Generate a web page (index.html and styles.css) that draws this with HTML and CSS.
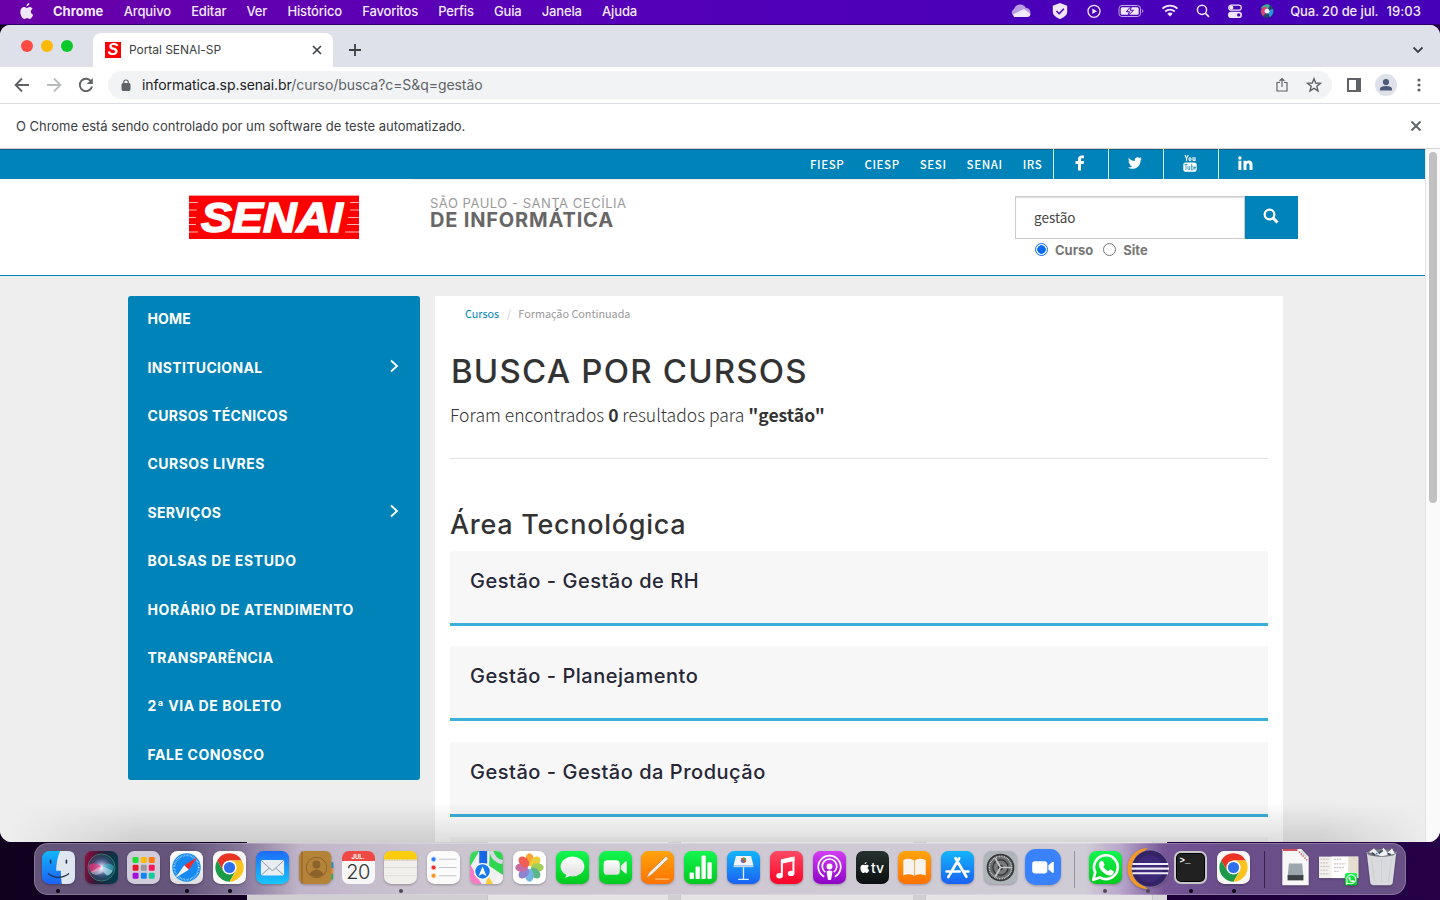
FILE: index.html
```html
<!DOCTYPE html>
<html lang="pt-BR">
<head>
<meta charset="utf-8">
<title>Portal SENAI-SP</title>
<link rel="stylesheet" href="styles.css">
</head>
<body>
<svg width="0" height="0" class="defs">
  <defs>
    <linearGradient id="gBlue" x1="0" y1="0" x2="0" y2="1"><stop offset="0" stop-color="#1e6bfa"/><stop offset="1" stop-color="#17c6fb"/></linearGradient>
    <linearGradient id="gBlue2" x1="0" y1="0" x2="0" y2="1"><stop offset="0" stop-color="#12b5fb"/><stop offset="1" stop-color="#1b62f2"/></linearGradient>
    <linearGradient id="gGreen" x1="0" y1="0" x2="0" y2="1"><stop offset="0" stop-color="#12f650"/><stop offset="1" stop-color="#03c91e"/></linearGradient>
    <linearGradient id="gRed" x1="0" y1="0" x2="0" y2="1"><stop offset="0" stop-color="#fd4a64"/><stop offset="1" stop-color="#fa0427"/></linearGradient>
    <linearGradient id="gPurple" x1="0" y1="0" x2="0" y2="1"><stop offset="0" stop-color="#d33df4"/><stop offset="1" stop-color="#8d05c5"/></linearGradient>
    <linearGradient id="gOrange" x1="0" y1="0" x2="0" y2="1"><stop offset="0" stop-color="#ffa40b"/><stop offset="1" stop-color="#ff7202"/></linearGradient>
    <linearGradient id="gWhite" x1="0" y1="0" x2="0" y2="1"><stop offset="0" stop-color="#fff"/><stop offset="1" stop-color="#dedede"/></linearGradient>
    <linearGradient id="gSiri" x1="0" y1="0" x2="1" y2="0.2"><stop offset="0" stop-color="#9b0b3b"/><stop offset=".5" stop-color="#2b1c3a"/><stop offset="1" stop-color="#043b4c"/></linearGradient>
    <radialGradient id="gOrb"><stop offset="0" stop-color="#fff"/><stop offset=".3" stop-color="#a9a4d6" stop-opacity=".9"/><stop offset=".7" stop-color="#3c6f9e" stop-opacity=".5"/><stop offset="1" stop-color="#17605f" stop-opacity=".4"/></radialGradient>
    <symbol id="chrome" viewBox="0 0 100 100">
      <rect width="100" height="100" rx="22" fill="#f8f8f8"/>
      <path d="M50 7A43 43 0 0 1 87.2 28.5H50L31.4 60.7 12.8 28.5A43 43 0 0 1 50 7Z" fill="#ea3323"/>
      <path d="M12.8 28.5A43 43 0 0 0 50 93L68.6 60.7 31.4 60.7Z" fill="#1d9a48"/>
      <path d="M87.2 28.5A43 43 0 0 1 50 93L68.6 60.7 50 28.5Z" fill="#fcc31e"/>
      <circle cx="50" cy="50" r="21.5" fill="#fff"/><circle cx="50" cy="50" r="17" fill="#2e70ee"/>
    </symbol>
    <symbol id="whats" viewBox="0 0 100 100">
      <rect width="100" height="100" rx="22" fill="url(#gGreen)"/>
      <path d="M13 87 19 65A36 36 0 1 1 33 80Z" fill="none" stroke="#fff" stroke-width="8" stroke-linejoin="round"/>
      <path d="M35 31q5-4 8 1l4 9q0 4-4 7 5 9 15 13 4-6 8-5l9 5q1 9-8 13-10 3-24-9-17-17-12-28 1-4 4-6Z" fill="#fff"/>
    </symbol>
  </defs>
</svg>
<div class="desktop">
  <header class="menubar">
    <nav class="menus">
      <svg class="apple" width="14" height="16" viewBox="0 0 14 16"><path d="M9.300 0c.1 1.700-1.200 3.300-2.800 3.300C6.300 1.700 7.700.2 9.300 0ZM9.600 4c1.100 0 2.300.6 3 1.700-2.600 1.500-2.200 5 .6 6C12.500 13.500 11.100 16 9.600 16c-1 0-1.300-.7-2.600-.7S5.300 16 4.400 16C2.500 16 .3 12.200.3 9c0-3.200 2-4.900 3.900-4.900 1.200 0 2.100.8 2.900.8.700 0 1.500-.9 2.500-.9Z" fill="#f0e6fa"/></svg>
      <b class="m-app">Chrome</b><span>Arquivo</span><span>Editar</span><span>Ver</span><span>Histórico</span><span>Favoritos</span><span>Perfis</span><span>Guia</span><span>Janela</span><span>Ajuda</span>
    </nav>
    <div class="status">
      <svg class="cloud" width="22" height="24" viewBox="0 0 22 24"><path d="M5 17.500a4 4 0 0 1-1-7.500 6.500 6.500 0 0 1 12-1 4.300 4.300 0 0 1 1 8.500Z" fill="#b99be5"/><path d="M3 15.500 14 10l6.500 5a3 3 0 0 1-2.500 3H4Z" fill="#f0e9fb"/></svg>
      <svg class="shield" width="16" height="24" viewBox="0 0 16 24"><path d="M8 4 15.200 6.800V13c0 3-3.500 5.500-7.200 7-3.700-1.500-7.200-4-7.200-7V6.800Z" fill="#f0e6fa"/><path d="m4.500 12 2.700 2.700 4.600-5" fill="none" stroke="#4a00b8" stroke-width="1.600"/></svg>
      <svg width="14" height="24" viewBox="0 0 14 24"><circle cx="7" cy="12.300" r="6" fill="none" stroke="#f0e6fa" stroke-width="1.300"/><path d="m5.300 9.500 4.700 2.800-4.700 2.800Z" fill="#f0e6fa"/></svg>
      <svg width="26" height="24" viewBox="0 0 26 24"><rect x="1" y="6.500" width="21.500" height="11" rx="3" fill="none" stroke="#c5a9eb"/><rect x="2.700" y="8.200" width="18" height="7.600" rx="1.500" fill="#f0e6fa"/><path d="M24 10.500q2 1.500 0 3" fill="none" stroke="#c5a9eb"/><path d="M13.500 7 8.300 12.700h3.200L9.700 17l5.800-5.700h-3.200Z" fill="#f0e6fa" stroke="#4a00b8"/></svg>
      <svg width="18" height="24" viewBox="0 0 18 24"><path d="M1.500 9.600a11 11 0 0 1 15 0M4.200 12.500a7 7 0 0 1 9.600 0" fill="none" stroke="#f0e6fa" stroke-width="1.900"/><path d="M9 17.500 6.300 14.700a4 4 0 0 1 5.400 0Z" fill="#f0e6fa"/></svg>
      <svg width="14" height="24" viewBox="0 0 14 24"><circle cx="6" cy="10.800" r="4.600" fill="none" stroke="#f0e6fa" stroke-width="1.500"/><path d="m9.300 14.200 3.700 3.700" stroke="#f0e6fa" stroke-width="1.700"/></svg>
      <svg width="16" height="24" viewBox="0 0 16 24"><rect x="1.700" y="6.200" width="12.600" height="5" rx="2.500" fill="none" stroke="#f0e6fa" stroke-width="1.200"/><circle cx="4.300" cy="8.700" r="2.100" fill="#f0e6fa"/><rect x="1" y="12.700" width="14" height="6.300" rx="3.100" fill="#f0e6fa"/><circle cx="11.700" cy="15.900" r="1.700" fill="#4a00b8"/></svg>
      <svg width="14" height="24" viewBox="0 0 14 24"><circle cx="7" cy="12.200" r="6.800" fill="#244468"/><path d="M1 9a7 7 0 0 1 9-3L7 12Z" fill="#35b39a"/><path d="M1 12q1-5 6-4v5l-4 4q-2-2-2-5Z" fill="#e04078"/><path d="m7 12 6-2q1 5-3 8Z" fill="#2a9ae2"/><circle cx="7" cy="12.200" r="2.400" fill="#f3eafc"/></svg>
      <span class="clock">Qua. 20 de jul.</span><span class="time">19:03</span>
    </div>
  </header>

  <main class="window">
    <div class="tabstrip">
      <div class="lights"><i class="red"></i><i class="yellow"></i><i class="green"></i></div>
      <div class="tab">
        <span class="favicon">S</span><span class="tab-title">Portal SENAI-SP</span>
        <svg width="10" height="10" viewBox="0 0 10 10"><path d="m1 1 8 8M9 1 1 9" stroke="#3c4043" stroke-width="1.600"/></svg>
      </div>
      <svg class="plus" width="14" height="14" viewBox="0 0 14 14"><path d="M7 1v12M1 7h12" stroke="#3c4043" stroke-width="1.800"/></svg>
      <svg class="chev" width="12" height="8" viewBox="0 0 12 8"><path d="m1.500 1.500 4.500 4.500 4.500-4.500" fill="none" stroke="#3c4043" stroke-width="1.800"/></svg>
    </div>
    <div class="toolbar">
      <svg class="nav-i" width="16" height="16" viewBox="0 0 16 16"><path d="M15 8H2M8 1.500 1.600 8 8 14.500" fill="none" stroke="#5f6368" stroke-width="1.800"/></svg>
      <svg class="nav-i" width="16" height="16" viewBox="0 0 16 16"><path d="M1 8h13M8 1.500 14.400 8 8 14.500" fill="none" stroke="#babcbe" stroke-width="1.800"/></svg>
      <svg class="nav-i" width="16" height="16" viewBox="0 0 16 16"><path d="M13.200 4.500A6.200 6.200 0 1 0 14 9.500" fill="none" stroke="#5f6368" stroke-width="1.900"/><path d="M14.800 1v6H8.800Z" fill="#5f6368"/></svg>
      <div class="omnibox">
        <svg width="10" height="13" viewBox="0 0 10 13"><rect x="1" y="4.500" width="8" height="7" rx="1" fill="#5f6368" stroke="#5f6368"/><path d="M2.700 5V3.300a2.300 2.300 0 0 1 4.600 0V5" fill="none" stroke="#5f6368" stroke-width="1.200"/></svg>
        <span class="url"><b>informatica.sp.senai.br</b>/curso/busca?c=S&amp;q=gestão</span>
        <svg width="12" height="16" viewBox="0 0 12 16"><path d="M4 5.500H1V14h10V5.500H8M6 10V1.800M3.500 4 6 1.500 8.500 4" fill="none" stroke="#5f6368" stroke-width="1.200"/></svg>
        <svg width="16" height="16" viewBox="0 0 16 16"><path d="m8 1.700 1.700 4.300 4.700.3-3.600 3 1.200 4.600L8 11.400l-4 2.500 1.200-4.600-3.600-3L6.300 6Z" fill="none" stroke="#5f6368" stroke-width="1.400"/></svg>
      </div>
      <svg class="panel" width="14" height="14" viewBox="0 0 14 14"><path d="M0 0h14v14H0ZM2 2v10h7V2Z" fill="#5f6368" fill-rule="evenodd"/></svg>
      <svg class="user" width="22" height="22" viewBox="0 0 22 22"><circle cx="11" cy="11" r="11" fill="#dee1e9"/><circle cx="11" cy="8" r="3.100" fill="#4d5b78"/><path d="M5 16.500V15c0-2.200 3.500-3 6-3s6 .8 6 3v1.500Z" fill="#4d5b78"/></svg>
      <svg class="dots" width="4" height="14" viewBox="0 0 4 14"><g fill="#5f6368"><circle cx="2" cy="2" r="1.600"/><circle cx="2" cy="7" r="1.600"/><circle cx="2" cy="12" r="1.600"/></g></svg>
    </div>
    <div class="infobar"><span>O Chrome está sendo controlado por um software de teste automatizado.</span>
      <svg width="12" height="12" viewBox="0 0 12 12"><path d="m1.500 1.500 9 9M10.500 1.500l-9 9" stroke="#5f6368" stroke-width="1.900"/></svg>
    </div>
    <div class="viewport">
      <div class="page">
        <div class="topbar">
          <nav class="toplinks"><a>FIESP</a><a>CIESP</a><a>SESI</a><a>SENAI</a><a>IRS</a></nav>
          <div class="social">
            <a><svg width="10" height="16" viewBox="0 0 10 16"><path d="M9 .5V3.200H7.400C6.300 3.200 6 3.700 6 4.500V6h3l-.4 2.900H6V15.500H3V8.900H.5V6H3V4C3 1.600 4.500.4 6.700.4 7.700.4 8.600.5 9 .5Z" fill="#fff"/></svg></a>
            <a><svg width="14" height="12" viewBox="0 0 14 12"><path d="M14 1.500 12.600 3c.2 5-3.600 8.800-8.200 8.800C2.800 11.800 1.300 11.400 0 10.500c1.500.2 3-.2 4.200-1.200C3 9.200 2 8.400 1.600 7.300h1.200C1.500 7 .5 5.800.5 4.400l1.300.4C.5 3.900.2 2.200.9.900c1.500 1.800 3.500 2.900 5.900 3C6.200.7 9.600-1 11.700 1l1.800-.7-1.200 1.600Z" fill="#fff"/></svg></a>
            <a><svg width="14" height="17" viewBox="0 0 14 17"><path d="m2 0 1.500 3.200V6M5.200 0 3.500 3.500M6 3.500v1.200q1 1.500 2 0V3.500q-1-1.500-2 0ZM10 2v3q.5.800 2 0M12 2v4" fill="none" stroke="#fff" stroke-width="1.100"/><rect x=".3" y="7.500" width="13.400" height="9.200" rx="2.200" fill="#fff"/><path d="M1.500 9.500h3M3 9.500V15M5 11v3q.5 1 1.700 0M6.700 11v4M8.600 9v6q2 .3 1.700-1.500V12q-.5-1.200-1.700-.5M12.500 14q-1 1-1.200-.5V12q.7-1.200 1.300 0v1h-1.300" fill="none" stroke="#0083b8" stroke-width=".7"/></svg></a>
            <a><svg width="15" height="14" viewBox="0 0 15 14"><path d="M.4 4.700h3V14h-3ZM5.500 4.700h3v1.200C9.600 3.900 14.500 3.700 14.500 8.500V14h-3V9.200c0-2.800-3-2.600-3 0V14h-3Z" fill="#fff"/><circle cx="1.900" cy="2" r="1.700" fill="#fff"/></svg></a>
          </div>
        </div>
        <div class="header">
          <svg class="logo" width="170" height="44" viewBox="0 0 170 44"><rect width="170" height="44" fill="#fe0000"/><path d="M0 .5h170" stroke="#ff9c9c"/><path d="M0 7.500h9M0 15h8M0 22.500h7M0 29.500h7M0 37h9M161 7.500h9M161 15h9M159 22.500h11M158 29.500h12M156 37h14" stroke="#ffb4b4" stroke-width="1.200"/><text x="12" y="37" textLength="142" lengthAdjust="spacingAndGlyphs">SENAI</text></svg>
          <div class="unit"><span>SÃO PAULO - SANTA CECÍLIA</span><b>DE INFORMÁTICA</b></div>
          <div class="search">
            <div class="search-row"><div class="field">gestão</div><div class="go"><svg width="16" height="16" viewBox="0 0 16 16"><circle cx="6.500" cy="6.500" r="4.800" fill="none" stroke="#fff" stroke-width="2.300"/><path d="m10 10 4.500 4.500" stroke="#fff" stroke-width="3"/></svg></div></div>
            <div class="radios"><i class="radio on"></i><b>Curso</b><i class="radio"></i><b>Site</b></div>
          </div>
        </div>
        <div class="columns">
          <aside class="side">
            <a class="snug">HOME</a>
            <a class="close">INSTITUCIONAL<svg width="10" height="14" viewBox="0 0 10 14"><path d="m2 1.500 6 5.500-6 5.500" fill="none" stroke="#fff" stroke-width="1.800"/></svg></a>
            <a class="close">CURSOS TÉCNICOS</a><a>CURSOS LIVRES</a>
            <a class="close">SERVIÇOS<svg width="10" height="14" viewBox="0 0 10 14"><path d="m2 1.500 6 5.500-6 5.500" fill="none" stroke="#fff" stroke-width="1.800"/></svg></a>
            <a class="wide">BOLSAS DE ESTUDO</a><a class="wide">HORÁRIO DE ATENDIMENTO</a><a>TRANSPARÊNCIA</a><a class="wide">2ª VIA DE BOLETO</a><a class="wide">FALE CONOSCO</a>
          </aside>
          <section class="content">
            <div class="crumbs"><a>Cursos</a><i>/</i><span>Formação Continuada</span></div>
            <h1>BUSCA POR CURSOS</h1>
            <p class="found">Foram encontrados <b>0</b> resultados para <b>"gestão"</b></p>
            <hr>
            <h2>Área Tecnológica</h2>
            <div class="card">Gestão - Gestão de RH</div>
            <div class="card">Gestão - Planejamento</div>
            <div class="card">Gestão - Gestão da Produção</div>
            <div class="card"></div>
          </section>
        </div>
      </div>
      <div class="scroll"><div class="thumb"></div></div>
    </div>
    <div class="shade"></div>
  </main>

  <div class="behind"><i class="b1"></i><i class="b2"></i><i class="b3"></i><i class="b4"></i></div>

  <footer class="dock">
    <div class="app run"><svg viewBox="0 0 100 100"><rect width="100" height="100" rx="22" fill="url(#gBlue2)"/><path d="M55 0H78Q100 0 100 22V78Q100 100 78 100H60Q57 82 57 60H43Q43 28 55 0Z" fill="#dfe6f0"/><path d="M26 28v8M74 28v8" stroke="#20304a" stroke-width="5" stroke-linecap="round"/><path d="M18 68Q50 92 82 68" fill="none" stroke="#20304a" stroke-width="4"/></svg></div>
    <div class="app"><svg viewBox="0 0 100 100"><rect width="100" height="100" rx="22" fill="url(#gSiri)"/><circle cx="50" cy="50" r="41" fill="url(#gOrb)" stroke="#479481" stroke-width="2"/><path d="M10 44Q28 28 50 48 28 75 14 58Z" fill="#f0347e" opacity=".7"/><path d="M50 48Q72 28 88 48 82 74 64 76Z" fill="#40c9d7" opacity=".5"/><path d="M16 64 50 45 84 60Q70 85 55 64 32 82 16 64Z" fill="#fff" opacity=".4"/></svg></div>
    <div class="app"><svg viewBox="0 0 100 100"><rect width="100" height="100" rx="22" fill="#d0ccd9"/><g><rect x="17" y="18" width="18" height="18" rx="4" fill="#1edc32"/><rect x="42" y="18" width="18" height="18" rx="4" fill="#fbb908"/><rect x="66" y="18" width="18" height="18" rx="4" fill="#fb7a08"/><rect x="17" y="42" width="18" height="18" rx="4" fill="#e91828"/><rect x="42" y="42" width="18" height="18" rx="4" fill="#96969c"/><rect x="66" y="42" width="18" height="18" rx="4" fill="#f7195c"/><rect x="17" y="66" width="18" height="18" rx="4" fill="#a211dd"/><rect x="42" y="66" width="18" height="18" rx="4" fill="#1386f5"/><rect x="66" y="66" width="18" height="18" rx="4" fill="#12caa0"/></g></svg></div>
    <div class="app run"><svg viewBox="0 0 100 100"><rect width="100" height="100" rx="22" fill="url(#gWhite)"/><circle cx="50" cy="50" r="43" fill="#168af2"/><circle cx="50" cy="50" r="37" fill="none" stroke="#d0e8ff" stroke-width="6" stroke-dasharray="1.500 3"/><path d="M83 19 57 57 43 43Z" fill="#f02c2c"/><path d="M17 81 43 43 57 57Z" fill="#f4f4f4"/></svg></div>
    <div class="app run"><svg><use href="#chrome"/></svg></div>
    <div class="app"><svg viewBox="0 0 100 100"><rect width="100" height="100" rx="22" fill="url(#gBlue)"/><rect x="15" y="27" width="70" height="47" rx="5" fill="#e9edf2"/><path d="m17 30 29 27q4 3 8 0L83 30M17 72 40 52M83 72 60 52" fill="none" stroke="#8b99a8" stroke-width="3"/></svg></div>
    <div class="app"><svg viewBox="0 0 100 100"><path d="M90 34h14v18H90Z" fill="#248fc4"/><path d="M90 52h13v17H90Z" fill="#ef8b24"/><path d="M90 69h13v17H90Z" fill="#1fb357"/><rect width="98" height="100" rx="18" fill="#b48338"/><path d="M9 1v98" stroke="#8a602b" stroke-width="3"/><circle cx="53" cy="50" r="31" fill="none" stroke="#8b632c" stroke-width="3"/><circle cx="53" cy="41" r="12" fill="#8b632c"/><path d="M31 70Q53 42 75 70 53 90 31 70Z" fill="#8b632c"/></svg></div>
    <div class="app cal"><span>JUL.</span><b>20</b></div>
    <div class="app run grey"><svg viewBox="0 0 100 100"><rect width="100" height="100" rx="22" fill="#f0efec"/><path d="M0 26V22Q0 0 22 0H78Q100 0 100 22V26Z" fill="#fdcc0c"/><path d="M0 28h100" stroke="#aaa08a" stroke-width="2" stroke-dasharray="3 2"/><path d="M0 50h100M0 75h100" stroke="#d4d2ce" stroke-width="2"/></svg></div>
    <div class="app"><svg viewBox="0 0 100 100"><rect width="100" height="100" rx="22" fill="#fbfbfb"/><g stroke-width="3"><circle cx="20" cy="25" r="7" fill="#2778f0" stroke="#aaccff"/><circle cx="20" cy="50" r="7" fill="#ec2b2b" stroke="#ffb5b5"/><circle cx="20" cy="75" r="7" fill="#f69324" stroke="#ffd8ab"/><path d="M37 25h52M37 50h52M37 75h52" stroke="#c5c5c5"/></g></svg></div>
    <div class="app"><svg viewBox="0 0 100 100"><rect width="100" height="100" rx="22" fill="#f0eff0"/><path d="M22 0H28L0 48V22Q0 0 22 0Z" fill="#36da58"/><path d="M28 0H52V38H28Z" fill="#1766e5"/><path d="M60 0H78Q100 0 100 22V73L58 45Z" fill="#2ed551"/><path d="M64 0Q72 30 99 34" fill="none" stroke="#d6d8df" stroke-width="13"/><path d="M0 40 35 100H22Q0 100 0 78Z" fill="#f97bc6"/><path d="M100 80 84 72 72 100H78Q100 100 100 80Z" fill="#f4f4f4"/><path d="M55 76 70 100H48Z" fill="#fdca31"/><circle cx="38" cy="62" r="24" fill="#1679ee" stroke="#fff" stroke-width="4"/><path d="m38 47 12 29-12-7-12 7Z" fill="#fff"/></svg></div>
    <div class="app"><svg viewBox="0 0 100 100"><rect width="100" height="100" rx="22" fill="#fff"/><g opacity=".86"><ellipse cx="50" cy="26" rx="13" ry="19" fill="#fa9512"/><ellipse cx="50" cy="26" rx="13" ry="19" fill="#e6c519" transform="rotate(45 50 50)"/><ellipse cx="50" cy="26" rx="13" ry="19" fill="#93c83c" transform="rotate(90 50 50)"/><ellipse cx="50" cy="26" rx="13" ry="19" fill="#42ab78" transform="rotate(135 50 50)"/><ellipse cx="50" cy="26" rx="13" ry="19" fill="#5aa9df" transform="rotate(180 50 50)"/><ellipse cx="50" cy="26" rx="13" ry="19" fill="#7c71c6" transform="rotate(225 50 50)"/><ellipse cx="50" cy="26" rx="13" ry="19" fill="#c05394" transform="rotate(270 50 50)"/><ellipse cx="50" cy="26" rx="13" ry="19" fill="#ee4336" transform="rotate(315 50 50)"/></g></svg></div>
    <div class="app"><svg viewBox="0 0 100 100"><rect width="100" height="100" rx="22" fill="url(#gGreen)"/><ellipse cx="50" cy="47" rx="36" ry="30" fill="url(#gWhite)"/><path d="M32 68q1 7-6 13 13-1 19-8Z" fill="#eee"/></svg></div>
    <div class="app"><svg viewBox="0 0 100 100"><rect width="100" height="100" rx="22" fill="url(#gGreen)"/><rect x="14" y="28" width="49" height="44" rx="11" fill="url(#gWhite)"/><path d="M66 45 80 32q4-3 4 2V66q0 5-4 2L66 55Z" fill="#eee"/></svg></div>
    <div class="app"><svg viewBox="0 0 100 100"><rect width="100" height="100" rx="22" fill="url(#gOrange)"/><path d="M75 17q8 0 7 8L32 72 16 82 24 66Z" fill="#eee" stroke="#b96a15" stroke-width="1.500"/><path d="M42 85h44" stroke="#ffd394" stroke-width="3"/></svg></div>
    <div class="app"><svg viewBox="0 0 100 100"><rect width="100" height="100" rx="22" fill="url(#gGreen)"/><g fill="#fff"><rect x="17" y="65" width="13" height="20" rx="3"/><rect x="35" y="47" width="13" height="38" rx="3"/><rect x="53" y="14" width="13" height="71" rx="3"/><rect x="71" y="34" width="13" height="51" rx="3"/></g></svg></div>
    <div class="app"><svg viewBox="0 0 100 100"><rect width="100" height="100" rx="22" fill="url(#gBlue2)"/><path d="M27 15h46l7 29H20Z" fill="#eff5fa"/><path d="M20 44h60v5H20Z" fill="#c4d8e8"/><circle cx="50" cy="28" r="8" fill="#e8472e"/><path d="M50 20v8h8a8 8 0 0 0-8-8Z" fill="#27ba60"/><path d="M50 28h-8a8 8 0 0 0 8 8Z" fill="#387be6"/><path d="M50 49v35M34 86h32" stroke="#dceeff" stroke-width="4"/></svg></div>
    <div class="app"><svg viewBox="0 0 100 100"><rect width="100" height="100" rx="22" fill="url(#gRed)"/><path d="M36 74V29L71 21V67" fill="none" stroke="#fff" stroke-width="6"/><path d="M34 25 74 17V30L34 39Z" fill="#fff"/><ellipse cx="29" cy="75" rx="10" ry="8" fill="#fff"/><ellipse cx="64" cy="68" rx="10" ry="8" fill="#fff"/></svg></div>
    <div class="app"><svg viewBox="0 0 100 100"><rect width="100" height="100" rx="22" fill="url(#gPurple)"/><g fill="none" stroke="#fff" stroke-width="5"><path d="M34 78A34 34 0 1 1 66 78"/><path d="M37 64A22 22 0 1 1 63 64"/></g><circle cx="50" cy="47" r="9" fill="#fff"/><path d="M41 62q9-6 18 0l-4 24q-5 4-10 0Z" fill="#fff"/></svg></div>
    <div class="app tv"><svg viewBox="0 0 14 16"><path d="M9.300 0c.1 1.700-1.200 3.300-2.800 3.300C6.300 1.700 7.700.2 9.300 0ZM9.600 4c1.100 0 2.300.6 3 1.700-2.600 1.500-2.200 5 .6 6C12.500 13.500 11.100 16 9.600 16c-1 0-1.300-.7-2.600-.7S5.300 16 4.400 16C2.500 16 .3 12.200.3 9c0-3.200 2-4.900 3.900-4.900 1.200 0 2.100.8 2.900.8.700 0 1.500-.9 2.500-.9Z" fill="#fff"/></svg><span>tv</span></div>
    <div class="app"><svg viewBox="0 0 100 100"><rect width="100" height="100" rx="22" fill="url(#gOrange)"/><path d="M49 29Q34 19 16 28V74q18-7 33 1ZM51 29Q66 19 84 28V74q-18-7-33 1Z" fill="#f6f3ef"/></svg></div>
    <div class="app"><svg viewBox="0 0 100 100"><rect width="100" height="100" rx="22" fill="url(#gBlue2)"/><path d="M55 22 28 69M44 22 77 78M17 62h40M72 62h11M25 74l-3 5" stroke="#fff" stroke-width="8" stroke-linecap="round"/></svg></div>
    <div class="app"><svg viewBox="0 0 100 100"><rect width="100" height="100" rx="22" fill="#aeb5b9"/><circle cx="50" cy="50" r="42" fill="#36383a"/><circle cx="50" cy="50" r="34" fill="#686b6d" stroke="#c5c7c8" stroke-width="5" stroke-dasharray="3 2"/><circle cx="50" cy="50" r="23" fill="#77797a" stroke="#333" stroke-width="4"/><circle cx="50" cy="50" r="8" fill="#333"/><path d="M50 50H82M50 50 34 22M50 50 34 78" stroke="#c9c9c9" stroke-width="5"/></svg></div>
    <div class="app big"><svg viewBox="0 0 100 100"><rect width="100" height="100" rx="30" fill="#3982fb"/><rect x="20" y="34" width="42" height="34" rx="8" fill="#fff"/><path d="M65 45 76 36q4-2 4 2V64q0 4-4 2L65 57Z" fill="#fff"/></svg></div>
    <div class="sep"></div>
    <div class="app run grey"><svg><use href="#whats"/></svg></div>
    <div class="app run grey eclipse"><svg viewBox="0 0 100 100"><path d="M50 0A49 49 0 0 0 50 98Q23 80 23 49T50 0Z" fill="#f59a20"/><circle cx="55" cy="49" r="44" fill="#342365" stroke="#b9b2c8" stroke-width="1"/><circle cx="53" cy="49" r="32" fill="#3d2978"/><path d="M13 38h85M11 49h89M13 60h85" stroke="#f1edf8" stroke-width="5"/></svg></div>
    <div class="app run term"><span>&gt;_</span></div>
    <div class="app run"><svg><use href="#chrome"/></svg></div>
    <div class="sep dark"></div>
    <div class="app file"><svg viewBox="0 0 100 100"><path d="M10-6H67L90 18V104H10Z" fill="#f7f7f7"/><path d="M12-3H56" stroke="#c92d38" stroke-width="5"/><path d="M67-6 90 18 67 16Z" fill="#ddd"/><path d="m61 2 24 26" stroke="#d96670" stroke-width="5" stroke-dasharray="4 4"/><path d="M30 38H70L74 78H26Z" fill="#9ba7ac"/><path d="M26 73h48v16H26Z" fill="#3d4143"/></svg></div>
    <div class="app file"><svg viewBox="0 0 100 100"><rect x="-9" y="17" width="119" height="65" fill="#f3f1ec"/><path d="M29 17H80V82H29Z" fill="#fff"/><path d="M-5 25h27M-5 36h24M-5 47h28M-5 58h24M-5 69h26M36 25h22M36 39h36M36 50h30M36 62h16" stroke="#cfc8c8" stroke-width="4" stroke-dasharray="6 2"/><path d="M80 17h30v65H80Z" fill="#e4ddd0"/><svg x="69" y="67" width="38" height="38"><use href="#whats"/></svg></svg></div>
    <div class="app file"><svg viewBox="0 0 100 100"><path d="M5 3H95L84 96Q82 104 70 104H30Q18 104 16 96Z" fill="#d9dade"/><ellipse cx="50" cy="6" rx="44" ry="12" fill="#777c83"/><path d="m12 4 15-12 15 16L56-10 68 5 82-8 90 8 50 16Z" fill="#f0f0f0"/><path d="m20 5 10 7M42 7l12-9M68 8l10 3" stroke="#394654" stroke-width="5"/><path d="m33 7 5 2" stroke="#2f8ed0" stroke-width="4"/><path d="M20 25 29 93M80 25 71 93M50 25V92" stroke="#cbcdd2" stroke-width="3"/></svg></div>
  </footer>
</div>
</body>
</html>
```
FILE: styles.css
```css
* { box-sizing: border-box; }
body { margin: 0; font-family: Inter, "Liberation Sans", sans-serif; }
svg { display: block; flex: none; }
.defs { position: absolute; }
i { font-style: normal; }
.desktop { position: relative; width: 1440px; height: 900px; overflow: hidden; background: linear-gradient(90deg, #12001f, #16002c 70%, #250048); display: flex; flex-direction: column; }

.menubar { height: 25px; flex: none; padding-bottom: 2px; border-bottom: 1px solid #2b0066; background: linear-gradient(90deg, #6a00a8, #5800b8 35%, #4a00b8 70%, #4500b8); display: flex; justify-content: space-between; align-items: center; color: #f3eafc; font-size: 13px; font-weight: 500; white-space: nowrap; }
.menus { display: flex; align-items: center; padding-left: 20px; }
.menus > span { margin-right: 20.200px; letter-spacing: -.150px; }
.menus .apple { margin: -1px 19px 0 0; }
.m-app { font-weight: 700; margin-right: 20.500px; }
.status { display: flex; align-items: center; gap: 17px; padding-right: 19px; }
.cloud { margin-right: 3px; }
.shield { margin-right: 2px; }
.clock { margin-left: -1px; letter-spacing: -.100px; }
.time { margin-left: -9px; letter-spacing: .100px; }

.window { position: relative; height: 817px; flex: none; border-radius: 10px 10px 12px 12px; overflow: hidden; background: #fff; display: flex; flex-direction: column; }
.tabstrip { height: 42px; flex: none; background: #dee1e9; display: flex; align-items: center; padding: 0 16px 0 21px; }
.lights { display: flex; gap: 8px; width: 72px; }
.lights i { width: 12px; height: 12px; border-radius: 50%; }
.red { background: #ff4b42; }
.yellow { background: #fcb904; }
.green { background: #0cc92b; }
.tab { width: 240px; height: 34px; margin-top: 8px; background: #fff; border-radius: 8px 8px 0 0; display: flex; align-items: center; padding: 0 11px 0 12px; }
.favicon { width: 16px; height: 16px; background: #f00; color: #fff; font: italic 900 16px/16px "Liberation Sans", Arial, sans-serif; text-align: center; }
.tab-title { flex: 1; margin: -1px 0 0 8px; font-size: 12px; letter-spacing: -.050px; color: #3c4043; }
.plus { margin-left: 15px; margin-top: 8px; }
.chev { margin-left: auto; margin-top: 7px; }
.toolbar { height: 37px; flex: none; border-bottom: 1px solid #dadce0; display: flex; align-items: center; padding: 0 19.500px 0 14px; }
.nav-i { margin-right: 16px; }
.omnibox { width: 1224px; height: 28px; border-radius: 14px; background: #f1f3f4; margin-left: -2px; display: flex; align-items: center; padding: 0 10px 0 13px; gap: 18px; }
.url { flex: 1; margin: -2px 0 0 -7px; font-size: 14px; letter-spacing: -.070px; color: #5f6368; }
.url b { font-weight: 400; color: #202124; }
.panel { margin-left: 15px; }
.user { margin-left: 14px; }
.dots { margin-left: auto; }
.infobar { height: 45px; flex: none; border-bottom: 1px solid #d5d5d5; display: flex; align-items: center; justify-content: space-between; padding: 0 18px 0 16px; font-size: 13px; letter-spacing: -.025px; color: #3c4043; }
.viewport { flex: 1; min-height: 0; display: flex; }
.page { width: 1425px; background: #eee; overflow: hidden; }
.topbar { height: 30px; background: #0083b8; box-shadow: inset 0 1px 0 #08608a; display: flex; padding-left: 810px; }
.toplinks { display: flex; gap: 20px; width: 243px; font: 500 11.500px/30px "Noto Sans CJK SC", sans-serif; letter-spacing: .600px; color: #fff; }
.social { display: flex; }
.social a { width: 55px; height: 30px; border-left: 1px solid #d7ebf4; display: flex; align-items: center; justify-content: center; padding: 0 2px 2px 0; }
.header { height: 97px; background: #fff; border-bottom: 1px solid #0083b8; display: flex; padding-left: 189px; }
.logo { margin-top: 16px; overflow: visible; }
.logo text { font: italic 700 42px "Liberation Sans", Arial, sans-serif; fill: #fff; stroke: #fff; stroke-width: 1.500px; }
.unit { width: 547px; height: 70px; margin: 0 57px 0 52px; border-top: 1px solid #eee; padding: 15px 0 0 19px; display: flex; flex-direction: column; }
.unit span { font-size: 13px; line-height: 17px; letter-spacing: .520px; color: #9b9b9b; }
.unit b { font-size: 20px; line-height: 16px; letter-spacing: .820px; color: #676767; }
.search { padding-top: 17px; }
.search-row { display: flex; }
.field { width: 230px; height: 43px; border: 1px solid #ccc; padding-left: 18px; font: 400 13.500px/41px "Noto Sans CJK SC", sans-serif; color: #444; box-shadow: inset 0 1px 1px #ddd; }
.go { width: 53px; height: 43px; background: #0083b8; display: flex; align-items: center; justify-content: center; padding: 0 2px 3px 0; }
.radios { display: flex; align-items: center; height: 22px; padding-left: 20px; font-size: 13px; color: #777; }
.radio { width: 13px; height: 13px; border: 1px solid #777; border-radius: 50%; margin-right: 7px; margin-top: -1px; }
.radio.on { border-color: #0a69f5; background: radial-gradient(circle, #0a69f5 4px, #fff 4.500px); }
.radios b { margin-right: 10px; }
.columns { display: flex; gap: 15px; padding: 20px 0 0 128px; align-items: flex-start; }
.side { width: 292px; height: 484px; background: #0083b8; border-radius: 3px; }
.side a { height: 48.400px; display: flex; align-items: center; justify-content: space-between; padding: 0 21px 3px 19.500px; color: #fff; font-size: 14px; font-weight: 700; letter-spacing: .450px; }
.side .snug { letter-spacing: .150px; }
.side .close { letter-spacing: .320px; }
.side .wide { letter-spacing: .580px; }
.side a svg { margin-top: -3px; }
.content { width: 848px; background: #fff; padding: 0 15px; }
.crumbs { height: 36px; display: flex; padding-left: 15px; font: 400 10.800px/34px "Noto Sans CJK SC", sans-serif; color: #999; }
.crumbs a { color: #0083b8; }
.crumbs i { color: #ccc; margin: 0 7.500px; }
h1 { margin: 19px 0 0 1px; font-size: 33px; line-height: 40px; font-weight: 500; letter-spacing: 1.200px; color: #333; }
.found { margin: 8px 0 0; font: 300 17.550px/32px "Noto Sans CJK SC", sans-serif; color: #333; }
.found b { font-weight: 700; }
hr { border: 0; border-top: 1px solid #e3e3e3; margin: 27px 0 0; }
h2 { margin: 49px 0 0; font-size: 27px; line-height: 34px; font-weight: 500; letter-spacing: .700px; color: #333; }
.card { height: 75px; margin-bottom: 20.400px; background: #f7f7f7; border-bottom: 3px solid #3aafda; padding: 15px 20px; font-size: 20px; line-height: 30px; font-weight: 500; letter-spacing: .520px; color: #262636; }
h2 + .card { margin-top: 9px; }
.scroll { width: 15px; background: #fafafa; border-left: 1px solid #e4e4e4; padding: 3px 3px; }
.thumb { width: 8px; height: 351px; border-radius: 4px; background: #c1c1c1; }
.shade { position: absolute; left: 0; right: 0; bottom: 0; height: 40px; background: linear-gradient(90deg, #0000 10px, #0002 140px, #0002 1320px, #0000 1430px); mask-image: linear-gradient(#0000, #000); }

.behind { position: absolute; left: 247px; top: 842px; width: 920px; height: 58px; background: #d2cfd3; display: flex; }
.behind i { background: #e5e3e4; border-left: 1px solid #c8c8c8; }
.b1 { margin-left: 240px; width: 181px; }
.b2 { margin-left: 12px; width: 233px; }
.b3 { margin-left: 12px; width: 227px; }
.behind .b4 { background: #d9d7d9; flex: 1; }

.dock { position: absolute; left: 34px; top: 843px; width: 1372px; height: 52px; border-radius: 14px; border: 1px solid #ffffff38; background: linear-gradient(90deg, #64547a 0, #66557b 150px, #85769a 205px, #c0b5c9 265px, #cbc5d0 400px, #d0ccd6 1050px, #b9a7cb 1085px, #765596 1130px, #6b4e8b 1180px, #685086 1372px); display: flex; padding: 7px 0 0 1.900px; }
.app { position: relative; width: 42.840px; height: 33px; flex: none; display: flex; justify-content: center; }
.app > svg { width: 33px; height: 33px; overflow: visible; filter: drop-shadow(0 1px 1px #0004); }
.app.big > svg { width: 36px; height: 36px; margin-top: -2px; }
.run::after { content: ""; position: absolute; left: 19.500px; top: 38px; width: 4px; height: 4px; border-radius: 50%; background: #0a0514; }
.run.grey::after { background: #4e4852; }
.sep { width: 19.200px; flex: none; display: flex; justify-content: center; }
.sep::after { content: ""; width: 1px; height: 37px; background: #97929b; }
.sep.dark::after { background: #35204e; }
.cal { flex-direction: column; justify-content: flex-start; background: linear-gradient(#f04842 10px, #f7f7f7 10px); width: 33px; margin: 0 4.920px; border-radius: 7px; overflow: hidden; text-align: center; color: #fff; }
.cal span { font-size: 6px; line-height: 11px; font-weight: 700; }
.cal b { font-size: 20px; line-height: 21px; font-weight: 300; color: #333; letter-spacing: -.500px; }
.tv { width: 33px; margin: 0 4.920px; border-radius: 7px; background: linear-gradient(#26332f, #0b0f10); align-items: center; color: #fff; gap: 1px; }
.tv > svg { width: 10px; height: 11px; filter: none; }
.tv span { font-size: 14px; line-height: 14px; font-weight: 500; }
.eclipse > svg { width: 42px; height: 42px; margin-top: -3px; }
.term { width: 33px; margin: 0 4.920px; justify-content: flex-start; border-radius: 7px; background: #212122; border: 2px solid #c7c7c9; color: #fff; box-shadow: inset 0 0 0 1px #000; }
.term span { font: 700 9px/10px "Liberation Mono", monospace; margin: 3px 0 0 3px; }
.term::after { left: 12.500px; top: 36px; }
```
